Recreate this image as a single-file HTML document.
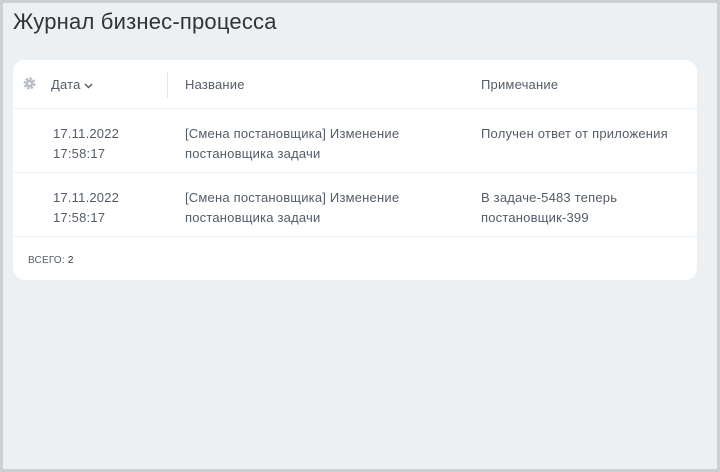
<!DOCTYPE html><html><head><meta charset="utf-8"><style>
body{margin:0;width:720px;height:472px;overflow:hidden;font-family:"Liberation Sans",sans-serif;}
.frame{position:absolute;left:0;top:0;width:714px;height:466px;border:3px solid #cfcfcf;background:#edf0f3;}
h1{position:absolute;left:10px;top:6px;margin:0;font-weight:normal;font-size:22px;color:#333;letter-spacing:0.2px;}
.card{position:absolute;left:10px;top:57px;width:684px;height:220px;background:#fff;border-radius:12px;font-size:13px;color:#535c69;letter-spacing:0.2px;}
.hdr{position:absolute;top:0;left:0;right:0;height:48px;border-bottom:1px solid #edf0f3;}
.row{position:absolute;left:0;right:0;height:63px;border-bottom:1px solid #edf0f3;}
.t{position:absolute;line-height:20px;}
.sep{position:absolute;left:154px;top:12px;width:1px;height:26px;background:#e3e6ea;}
</style></head><body><div class="frame">
<h1>Журнал бизнес-процесса</h1>
<div class="card">
<div class="hdr">
<svg style="position:absolute;left:10px;top:17px" width="13" height="13" viewBox="0 0 13 13"><circle cx="6.5" cy="6.5" r="4.5" fill="none" stroke="#b5bac0" stroke-width="3" stroke-dasharray="2.2 1.3"/><circle cx="6.5" cy="6.5" r="3.5" fill="#b5bac0"/><circle cx="6.5" cy="6.5" r="1.5" fill="#fff"/></svg>
<div class="t" style="left:38px;top:15px">Дата <svg width="9" height="6" viewBox="0 0 9 6" style="vertical-align:middle"><path d="M1 1l3.5 3.5L8 1" fill="none" stroke="#535c69" stroke-width="1.5"/></svg></div>
<div class="sep"></div>
<div class="t" style="left:172px;top:15px">Название</div>
<div class="t" style="left:468px;top:15px">Примечание</div>
</div>
<div class="row" style="top:49px">
<div class="t" style="left:40px;top:15px">17.11.2022<br>17:58:17</div>
<div class="t" style="left:172px;top:15px">[Смена постановщика] Изменение<br>постановщика задачи</div>
<div class="t" style="left:468px;top:15px">Получен ответ от приложения</div>
</div>
<div class="row" style="top:113px">
<div class="t" style="left:40px;top:15px">17.11.2022<br>17:58:17</div>
<div class="t" style="left:172px;top:15px">[Смена постановщика] Изменение<br>постановщика задачи</div>
<div class="t" style="left:468px;top:15px">В задаче-5483 теперь<br>постановщик-399</div>
</div>
<div class="t" style="left:15px;top:191px;font-size:10px">ВСЕГО: <b style="color:#333;font-weight:normal">2</b></div>
</div></div></body></html>
